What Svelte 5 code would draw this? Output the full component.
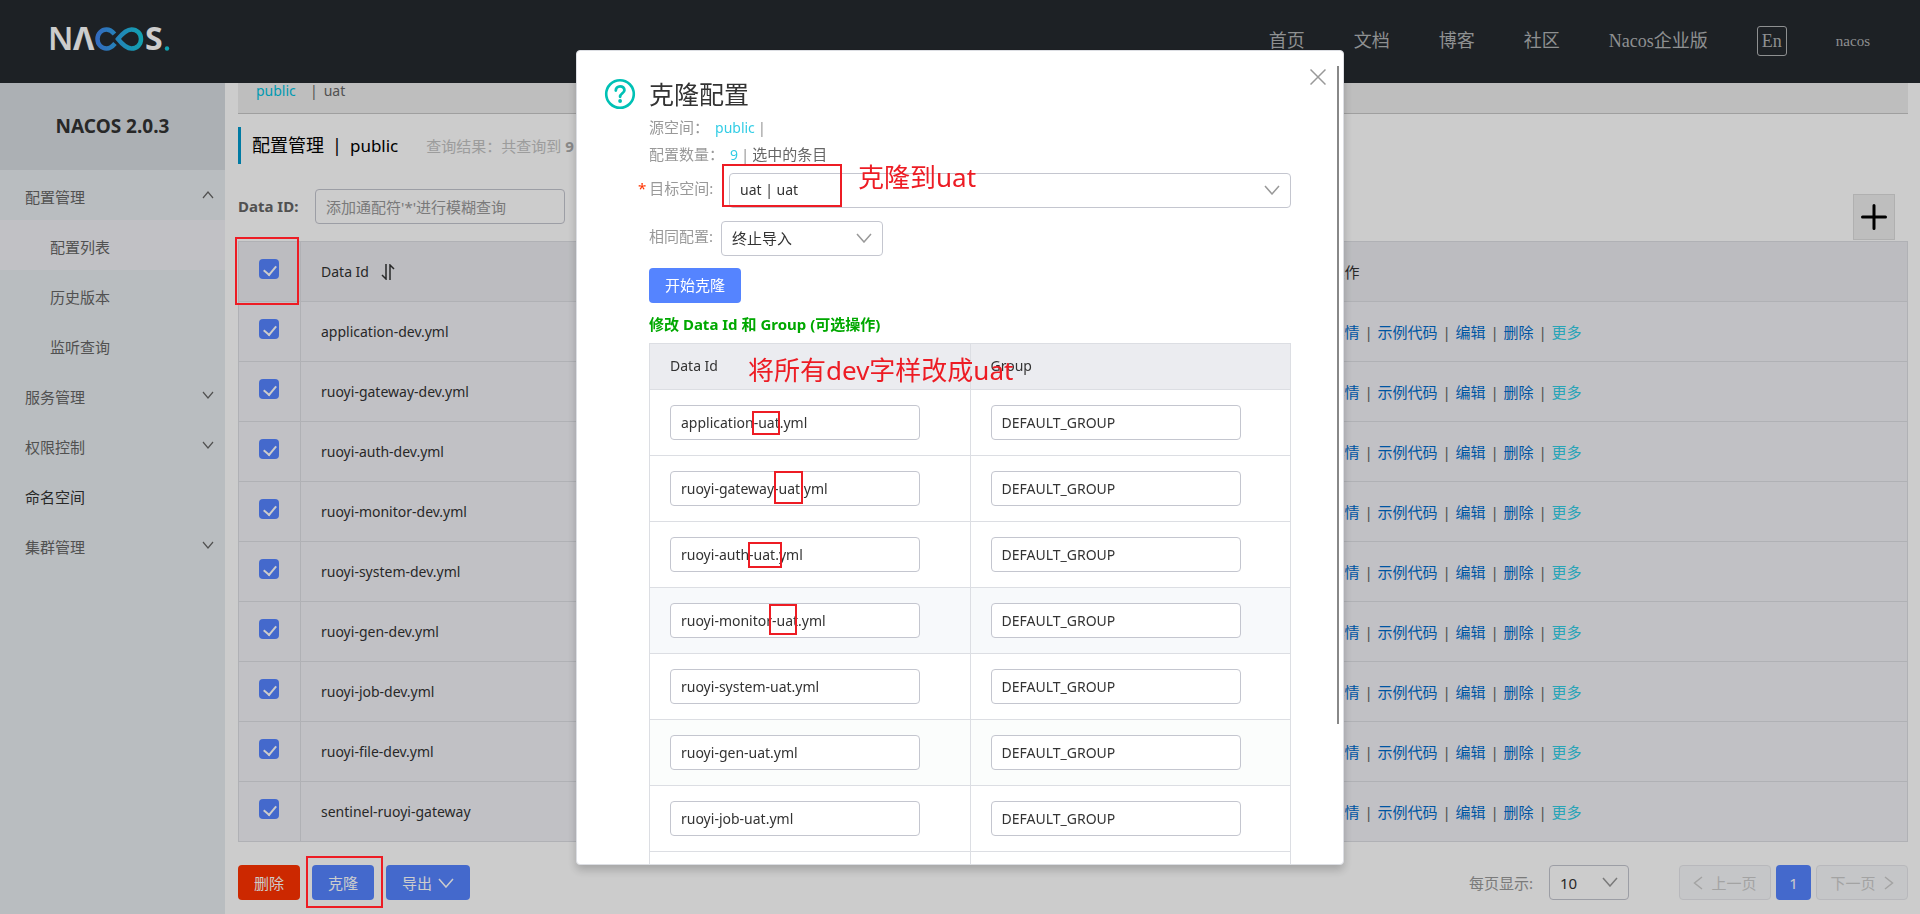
<script lang="ts">
  interface Mark {
    x: number;
    y: number;
    w: number;
    h: number;
  }

  const navLinks = ["首页", "文档", "博客", "社区", "Nacos企业版"];

  const menu = [
    { label: "配置管理", open: true, children: ["配置列表", "历史版本", "监听查询"] },
    { label: "服务管理", open: false, children: [] },
    { label: "权限控制", open: false, children: [] },
    { label: "命名空间", leaf: true, children: [] },
    { label: "集群管理", open: false, children: [] },
  ];

  const configs = [
    "application-dev.yml",
    "ruoyi-gateway-dev.yml",
    "ruoyi-auth-dev.yml",
    "ruoyi-monitor-dev.yml",
    "ruoyi-system-dev.yml",
    "ruoyi-gen-dev.yml",
    "ruoyi-job-dev.yml",
    "ruoyi-file-dev.yml",
    "sentinel-ruoyi-gateway",
  ];

  let clones = $state(
    configs.map((id) => ({ dataId: id.replace("-dev", "-uat"), group: "DEFAULT_GROUP" }))
  );

  const pageMarks: Mark[] = [
    { x: 235, y: 237, w: 64, h: 68 },
    { x: 306, y: 856, w: 77, h: 52 },
  ];

  // relative to the dialog
  const dialogMarks: Mark[] = [
    { x: 145, y: 113, w: 120, h: 43 },
    { x: 175, y: 360, w: 28, h: 24 },
    { x: 197, y: 420, w: 29, h: 33 },
    { x: 171, y: 491, w: 34, h: 26 },
    { x: 192, y: 553, w: 28, h: 31 },
  ];

  const dialogNotes = [
    { x: 281, y: 108, text: "克隆到uat" },
    { x: 171, y: 301, text: "将所有dev字样改成uat" },
  ];
</script>

{#snippet chevron()}
  <svg class="chevron" width="16" height="10" viewBox="0 0 16 10" fill="none" stroke="currentColor" stroke-width="1.5" aria-hidden="true">
    <path d="M1 1l7 8 7-8" />
  </svg>
{/snippet}

{#snippet mark(m: Mark)}
  <span class="mark" style="left: {m.x}px; top: {m.y}px; width: {m.w}px; height: {m.h}px"></span>
{/snippet}

<div class="page">
  <header>
    <a class="logo" href="#home" aria-label="NACOS">
      <svg width="120" height="30" viewBox="0 0 120 30">
        <defs>
          <linearGradient id="loop" x1="43" y1="0" x2="93" y2="0" gradientUnits="userSpaceOnUse">
            <stop offset="0" stop-color="#4480f0" />
            <stop offset="1" stop-color="#16cbdc" />
          </linearGradient>
        </defs>
        <g fill="#fff" font-family="'Noto Sans', sans-serif" font-size="32">
          <text x="-2" y="26" font-weight="600">N</text>
          <text x="23" y="26" font-weight="700">Λ</text>
          <text x="95" y="26" font-weight="700">S</text>
        </g>
        <g fill="none" stroke="url(#loop)" stroke-width="4.500">
          <path d="M64.500 10C62 7 59.500 5.500 56.500 5.500C51.500 5.500 47.500 9.500 47.500 15C47.500 20.500 51.500 24.500 56.500 24.500C60 24.500 62.500 22.500 65 19.500" />
          <path d="M68 15C72 10 76 5.500 81.500 5.500C87 5.500 91 9.500 91 15C91 20.500 87 24.500 81.500 24.500C76 24.500 72 20 68 15Z" />
        </g>
        <circle cx="117" cy="24.500" r="2.200" fill="#16cbdc" />
      </svg>
    </a>
    <nav>
      {#each navLinks as link}
        <a href="#{link}">{link}</a>
      {/each}
      <button class="lang">En</button>
      <a class="user" href="#user">nacos</a>
    </nav>
  </header>

  <div class="body">
    <aside>
      <h1>NACOS 2.0.3</h1>
      <ul>
        {#each menu as item}
          <li>
            <a class="item" class:leaf={item.leaf} href="#{item.label}">
              {item.label}
              {#if !item.leaf}
                <svg class:up={item.open} width="12" height="8" viewBox="0 0 12 8" fill="none" stroke="currentColor" stroke-width="1.2" aria-hidden="true">
                  <path d="M1 1l5 6 5-6" />
                </svg>
              {/if}
            </a>
            {#if item.children.length}
              <ul>
                {#each item.children as child, i}
                  <li><a class="item sub" class:active={i === 0} href="#{child}">{child}</a></li>
                {/each}
              </ul>
            {/if}
          </li>
        {/each}
      </ul>
    </aside>

    <main>
      <div class="spaces">
        <a class="current" href="#public">public</a>
        <span class="bar">|</span>
        <a href="#uat">uat</a>
      </div>

      <div class="heading">
        <h2>配置管理<span class="bar">|</span><span class="latin">public</span></h2>
        <p>查询结果：共查询到 <strong>9</strong></p>
      </div>

      <div class="query">
        <label for="data-id">Data ID:</label>
        <input id="data-id" type="text" placeholder="添加通配符'*'进行模糊查询" />
        <button class="add" aria-label="新建配置">
          <svg width="26" height="26" viewBox="0 0 26 26" stroke="#000" stroke-width="3" stroke-linecap="round">
            <path d="M13 1.500v23M1.500 13h23" />
          </svg>
        </button>
      </div>

      <table class="configs">
        <thead>
          <tr>
            <th class="check"><input type="checkbox" checked aria-label="全选" /></th>
            <th class="name">
              Data Id
              <svg width="14" height="16" viewBox="0 0 14 16" fill="none" stroke="currentColor" stroke-width="1.500" aria-hidden="true">
                <path d="M5 0v15L1 11M9 16V1l4 4" />
              </svg>
            </th>
            <th class="ops">操作</th>
          </tr>
        </thead>
        <tbody>
          {#each configs as config}
            <tr>
              <td class="check"><input type="checkbox" checked aria-label={config} /></td>
              <td class="name">{config}</td>
              <td class="ops">
                <div class="links">
                  <a href="#detail">详情</a><i>|</i><a href="#sample">示例代码</a><i>|</i><a href="#edit">编辑</a><i>|</i><a href="#delete">删除</a><i>|</i><a class="more" href="#more">更多</a>
                </div>
              </td>
            </tr>
          {/each}
        </tbody>
      </table>

      <footer>
        <button class="btn danger">删除</button>
        <button class="btn">克隆</button>
        <button class="btn">导出 {@render chevron()}</button>
        <label class="size-label" for="page-size">每页显示:</label>
        <div class="select size">
          <select id="page-size"><option>10</option><option>20</option></select>
          {@render chevron()}
        </div>
        <div class="pager">
          <button class="btn" disabled>
            <svg width="10" height="14" viewBox="0 0 10 14" fill="none" stroke="currentColor" stroke-width="1.500" aria-hidden="true"><path d="M9 1L1.500 7 9 13" /></svg>
            上一页
          </button>
          <button class="btn page-no">1</button>
          <button class="btn" disabled>
            下一页
            <svg width="10" height="14" viewBox="0 0 10 14" fill="none" stroke="currentColor" stroke-width="1.500" aria-hidden="true"><path d="M1 1l7.500 6L1 13" /></svg>
          </button>
        </div>
      </footer>
    </main>
  </div>
</div>

<div class="mask">
  <div class="dialog" role="dialog" aria-modal="true" aria-labelledby="dialog-title">
    <svg class="help" width="32" height="32" viewBox="0 0 32 32" fill="none" stroke="#00c1b5" aria-hidden="true">
      <circle cx="16" cy="16" r="13.800" stroke-width="2.600" />
      <path d="M11.800 12.600c0-2.600 1.800-4.300 4.300-4.300s4.300 1.600 4.300 3.900c0 3-4.300 3.200-4.300 6.600" stroke-width="2.800" stroke-linecap="round" />
      <circle cx="16.100" cy="23" r="1.900" fill="#00c1b5" stroke="none" />
    </svg>
    <button class="close" aria-label="关闭">
      <svg width="16" height="16" viewBox="0 0 16 16" stroke="#999" stroke-width="1.500"><path d="M0.500 0.500l15 15M15.500 0.500l-15 15" /></svg>
    </button>
    <span class="scrollbar"></span>

    <h3 id="dialog-title">克隆配置</h3>
    <p class="info">源空间：<span class="value">public</span><span class="bar">|</span></p>
    <p class="info">配置数量：<span class="value">9</span><span class="bar">|</span><span class="dark">选中的条目</span></p>

    <div class="field target">
      <label for="target">目标空间:</label>
      <div class="select">
        <select id="target"><option>uat | uat</option></select>
        {@render chevron()}
      </div>
    </div>
    <div class="field policy">
      <label for="policy">相同配置:</label>
      <div class="select">
        <select id="policy"><option>终止导入</option><option>跳过</option><option>覆盖</option></select>
        {@render chevron()}
      </div>
    </div>
    <button class="btn start">开始克隆</button>
    <h4>修改 Data Id 和 Group (可选操作)</h4>

    <table class="clones">
      <thead>
        <tr><th>Data Id</th><th>Group</th></tr>
      </thead>
      <tbody>
        {#each clones as row, i}
          <tr class:hovered={i === 3} class:fading={i === 5}>
            <td><input type="text" aria-label="Data Id" bind:value={row.dataId} /></td>
            <td><input type="text" aria-label="Group" bind:value={row.group} /></td>
          </tr>
        {/each}
      </tbody>
    </table>

    {#each dialogMarks as m}
      {@render mark(m)}
    {/each}
    {#each dialogNotes as note}
      <span class="note" style="left: {note.x}px; top: {note.y}px">{note.text}</span>
    {/each}
  </div>
  {#each pageMarks as m}
    {@render mark(m)}
  {/each}
</div>

<style>
  :global(body) {
    overflow: hidden;
    background: #fff;
  }
  .page,
  .mask {
    font-family: "Noto Sans", "Noto Sans CJK SC", sans-serif;
    font-size: 15px;
    line-height: 20px;
    color: #333;
  }
  .page *,
  .mask * {
    box-sizing: border-box;
  }
  .page {
    display: flex;
    flex-direction: column;
    height: 100vh;
    overflow: hidden;
  }
  a {
    text-decoration: none;
    color: inherit;
  }
  ul {
    list-style: none;
    margin: 0;
    padding: 0;
  }
  h1, h2, h3, h4, p {
    margin: 0;
  }
  button, input, select {
    font: inherit;
    color: inherit;
  }
  button {
    cursor: pointer;
  }

  header {
    flex: none;
    display: flex;
    align-items: center;
    justify-content: space-between;
    height: 83px;
    padding: 0 50px;
    background: #252a2f;
  }
  .logo svg {
    display: block;
    margin-top: -6px;
    overflow: visible;
  }
  nav {
    display: flex;
    align-items: center;
    gap: 49px;
    margin-top: -2px;
    font-family: "Liberation Serif", "Noto Sans CJK SC", serif;
    font-size: 18px;
    color: #b2b4b6;
  }
  .lang {
    width: 30px;
    height: 30px;
    padding: 0;
    background: none;
    border: 1px solid #b2b4b6;
    border-radius: 3px;
  }
  .user {
    font-size: 15px;
  }

  .body {
    flex: 1;
    display: flex;
    min-height: 0;
  }
  aside {
    flex: none;
    width: 225px;
    background: #e8edf0;
  }
  h1 {
    height: 87px;
    line-height: 87px;
    text-align: center;
    font-size: 19px;
    background: #d7dce2;
  }
  .item {
    display: flex;
    align-items: center;
    justify-content: space-between;
    height: 50px;
    padding: 3px 11px 0 25px;
    color: #666;
  }
  .item svg {
    margin-top: -4px;
  }
  .item .up {
    transform: rotate(180deg);
  }
  .item.leaf {
    color: #333;
  }
  .item.sub {
    padding-left: 50px;
  }
  .item.active {
    background: #f2f2f7;
  }

  main {
    flex: 1;
    min-width: 0;
    padding: 0 12px 0 13px;
  }
  .spaces {
    display: flex;
    gap: 6px;
    height: 31px;
    padding-left: 18px;
    line-height: 16px;
    font-size: 14px;
    color: #666;
    background: #eee;
    border-bottom: 1px solid #c7c7c7;
  }
  .spaces .current {
    width: 48px;
    color: #00c1de;
  }
  .heading {
    display: flex;
    align-items: center;
    gap: 28px;
    height: 37px;
    margin-top: 13px;
    padding-left: 11px;
    border-left: 3px solid #09c;
  }
  h2 {
    font-size: 18px;
    font-weight: 400;
    color: #000;
  }
  h2 .bar {
    margin: 0 8px;
  }
  h2 .latin {
    font-size: 17px;
  }
  .heading p {
    color: #c4c4c4;
  }
  .heading strong {
    color: #aaa;
  }
  .query {
    display: flex;
    align-items: flex-start;
    height: 51px;
    margin: 25px 0 1px;
  }
  .query label {
    width: 77px;
    line-height: 35px;
    font-weight: 700;
    color: #666;
  }
  input[type="text"] {
    width: 250px;
    height: 35px;
    padding: 0 10px;
    background: #fff;
    border: 1px solid #c4c6cf;
    border-radius: 4px;
    outline: none;
  }
  input::placeholder {
    color: #999;
  }
  .add {
    display: flex;
    align-items: center;
    justify-content: center;
    align-self: flex-end;
    width: 42px;
    height: 46px;
    margin: 0 13px 0 auto;
    padding: 0;
    background: #eee;
    border: 1px solid #ddd;
  }

  table {
    width: 100%;
    border-collapse: collapse;
    table-layout: fixed;
    font-size: 14px;
  }
  th, td {
    padding: 0 20px;
    text-align: left;
    font-weight: 400;
    border: 1px solid #dcdee3;
  }
  th {
    background: #ebecf0;
  }
  .configs tr {
    height: 60px;
  }
  .configs td {
    background: #f2f2f7;
  }
  .configs .check {
    width: 62px;
    padding-bottom: 5px;
    border-right: 1px solid #dcdee3;
  }
  .configs .name {
    border-right: none;
  }
  .configs .name svg {
    margin-left: 8px;
    vertical-align: -3px;
  }
  .configs .ops {
    width: 598px;
    border-left: none;
    font-size: 15px;
  }
  .links {
    display: flex;
    color: #006ccc;
  }
  .links i {
    width: 18px;
    text-align: center;
    font-style: normal;
    color: #666;
  }
  .links .more {
    color: #33cde5;
  }
  input[type="checkbox"] {
    appearance: none;
    display: block;
    position: relative;
    width: 20px;
    height: 20px;
    margin: 0;
    background: #5584ff;
    border-radius: 4px;
  }
  input[type="checkbox"]::after {
    content: "";
    position: absolute;
    left: 7px;
    top: 4px;
    width: 6px;
    height: 10px;
    border: solid #fff;
    border-width: 0 2px 2px 0;
    transform: rotate(40deg);
  }

  .btn {
    display: inline-flex;
    align-items: center;
    justify-content: center;
    gap: 6px;
    height: 35px;
    padding: 0 16px;
    color: #fff;
    background: #5584ff;
    border: none;
    border-radius: 4px;
  }
  .btn.danger {
    background: #f30;
  }
  footer {
    display: flex;
    align-items: center;
    gap: 12px;
    margin-top: 23px;
  }
  .size-label {
    margin-left: auto;
    margin-right: 4px;
    color: #999;
  }
  .select {
    position: relative;
  }
  .select select {
    appearance: none;
    display: block;
    width: 100%;
    height: 35px;
    padding: 0 10px;
    background: none;
    border: 1px solid #c4c6cf;
    border-radius: 4px;
    outline: none;
  }
  .select .chevron {
    position: absolute;
    right: 11px;
    top: 12px;
    color: #999;
    pointer-events: none;
  }
  .size {
    width: 80px;
    margin-right: 38px;
  }
  .pager {
    display: flex;
    gap: 5px;
  }
  .pager .btn:disabled {
    gap: 8px;
    color: #ccc;
    background: #f7f8fa;
    border: 1px solid #e6e7eb;
    width: 92px;
    padding: 0;
  }
  .page-no {
    width: 35px;
    padding: 0;
  }

  .mask {
    position: fixed;
    inset: 0;
    display: flex;
    align-items: center;
    justify-content: center;
    background: rgba(0, 0, 0, 0.2);
  }
  .dialog {
    position: relative;
    width: 40%;
    max-height: calc(100vh - 99px);
    overflow: hidden;
    padding: 27px 52px 0 72px;
    background: #fff;
    border: 1px solid #dcdee3;
    border-radius: 4px;
    box-shadow: 0 5px 10px rgba(0, 0, 0, 0.2);
  }
  .help {
    position: absolute;
    left: 27px;
    top: 27px;
  }
  .close {
    position: absolute;
    right: 17px;
    top: 18px;
    padding: 0;
    background: none;
    border: none;
  }
  .close svg {
    display: block;
  }
  .scrollbar {
    position: absolute;
    right: 4px;
    top: 15px;
    width: 2px;
    height: 81%;
    background: #888;
  }
  h3 {
    margin-bottom: 4px;
    font-size: 25px;
    font-weight: 400;
    line-height: 32px;
  }
  .info {
    line-height: 26px;
    color: #999;
  }
  .info .value {
    margin-left: 6px;
    font-size: 14px;
    color: #33cde5;
  }
  .info .bar {
    margin: 0 3px;
  }
  .info .dark {
    color: #666;
  }
  .field {
    display: flex;
    align-items: center;
  }
  .field label {
    margin-top: -4px;
    color: #999;
  }
  .target {
    margin-top: 5px;
  }
  .target label {
    width: 80px;
  }
  .target label::before {
    content: "*";
    margin-left: -11px;
    margin-right: 3px;
    color: #f30;
  }
  .target .select {
    flex: 1;
    font-size: 14px;
  }
  .policy {
    margin-top: 13px;
  }
  .policy label {
    width: 72px;
  }
  .policy .select {
    width: 162px;
  }
  .start {
    margin-top: 12px;
  }
  h4 {
    margin: 11px 0 9px;
    font-size: 15px;
    font-weight: 700;
    color: #00a800;
  }
  .clones th {
    height: 46px;
  }
  .clones td {
    height: 66px;
  }
  .clones .hovered {
    background: #f7f9fb;
  }
  .clones .fading {
    background: #fbfdfc;
  }

  .mark {
    position: absolute;
    border: 2px solid #ed1c24;
    pointer-events: none;
  }
  .note {
    position: absolute;
    font-size: 26px;
    line-height: 36px;
    white-space: nowrap;
    color: #ed1c24;
    pointer-events: none;
  }
</style>
